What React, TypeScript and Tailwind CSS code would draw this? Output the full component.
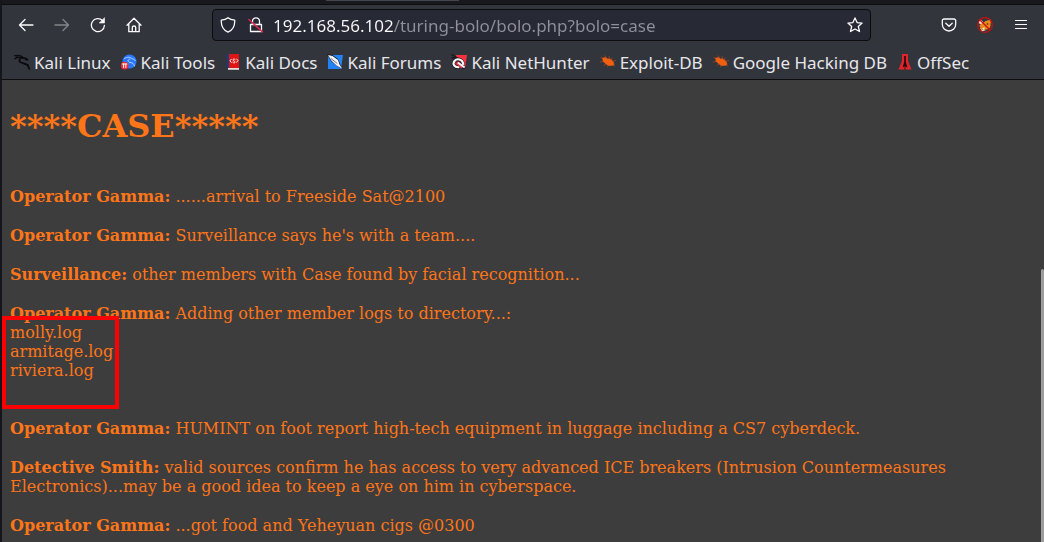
import type { ReactNode } from "react";

function Glyph({ children }: { children: ReactNode }) {
  return (
    <svg
      viewBox="0 0 16 16"
      className="size-4 shrink-0"
      fill="none"
      stroke="#fbfbfe"
      strokeWidth="1.3"
      strokeLinecap="round"
      strokeLinejoin="round"
      aria-hidden="true"
    >
      {children}
    </svg>
  );
}

function ToolButton({ label, disabled, children }: { label: string; disabled?: boolean; children: ReactNode }) {
  return (
    <button
      type="button"
      aria-label={label}
      disabled={disabled}
      className="flex h-8 w-9 items-center justify-center disabled:opacity-40"
    >
      <Glyph>{children}</Glyph>
    </button>
  );
}

function Dragon({ color }: { color: string }) {
  return (
    <g stroke={color} fill="none">
      <path d="M.5 1.8C4 .8 7.500 1.500 9.500 3.800M.8 4.800C3.500 2.800 6.500 2.800 9 4M2 2.800l3 .6" strokeWidth="1.100" />
      <path d="M9 3.800c2 .2 3.800 .8 4.800 2l-2.300-.3" strokeWidth="1.400" />
      <path d="M8.500 3.500C4.800 4.500 4.300 8 7.500 8.800c3.500 .8 6.500 1 7.800 6.200" strokeWidth="1.700" />
      <path d="M9 9.200c1.800 1.200 3.300 1.300 5 1.500" strokeWidth="1.300" />
    </g>
  );
}

function Bug() {
  return (
    <g stroke="#b8481a" strokeWidth=".7">
      <path d="M1 3.500l4 1.500M.5 8l4-1M5 1.800l2 3M9 2.500l.8 3M12 4l-.5 2.500M15.500 6.500l-3 1M4 11.500l2.500-2M7.500 12.500l1.500-2M14.800 12l-2.500-1.500" />
      <path
        d="M3 4.200c1.500-1 3.300-.5 4.500 .8c3-.6 5.800 1.800 6.500 5.500c-2.800 1.800-6.500 1.300-8.500-1.200C3.800 8.500 2.300 6.500 3 4.200z"
        fill="#f06010"
        stroke="#f06010"
      />
    </g>
  );
}

const bookmarks: { name: string; icon: ReactNode }[] = [
  { name: "Kali Linux", icon: <Dragon color="#08090b" /> },
  {
    name: "Kali Tools",
    icon: (
      <g stroke="none">
        <circle cx="8.500" cy="7.500" r="7" fill="#2777ff" />
        <path d="M3.500 4.500c3-2 6-1.500 7.500 .3c1.500 .1 2.700 .6 3.200 1.800M9 5c-3 .8-2.300 3 0 3.400c2.500 .4 4 1.200 4.500 3.600" fill="none" stroke="#c4deff" strokeWidth=".9" />
        <circle cx="3.600" cy="11.600" r="3.900" fill="#ed2b35" />
        <path d="M1.500 10h4.400M2.600 10v3.500M4.800 10v3.500" stroke="#fff" strokeWidth="1" />
      </g>
    ),
  },
  {
    name: "Kali Docs",
    icon: (
      <g stroke="none">
        <path d="M2 0h2v14H2z" fill="#173c83" />
        <path d="M4 0h10v14H4z" fill="#df1515" />
        <path d="M3 14h11v1.800H3z" fill="#eadada" />
        <path d="M6.300 5.200L5 6.800L6.300 8.400M10.200 5.600C9.300 4.500 8 4.800 8 6c0 1.200 2 .8 2 2.100c0 1-1.300 1.200-2.200 .3M11.700 5l1.300 1.600L11.700 8.200" fill="none" stroke="#fff" strokeWidth=".9" />
      </g>
    ),
  },
  {
    name: "Kali Forums",
    icon: (
      <g stroke="none">
        <path d="M1 1h15l-2 14H1z" fill="#2382f5" />
        <path d="M0 0l5 .8L11 5l2.500 6L15.500 15L10 12L4 7z" fill="#15171c" />
        <path d="M1 1l4.500 1L11 6l1.500 4.500l2.800 4.200L9.500 11.500L4.300 6.500z" fill="#f2f3f4" />
        <path d="M4 4.500l6 4.800" stroke="#4a5564" strokeWidth=".8" />
      </g>
    ),
  },
  {
    name: "Kali NetHunter",
    icon: (
      <g stroke="none">
        <path d="M5 1h11l-2 13H3z" fill="#f5323e" />
        <path d="M.5 .5L6 3.500M1 4l4-.5" stroke="#17191d" strokeWidth="1.300" />
        <path d="M11.800 9.500C11 5 6 4 3.500 7c-2.500 3.300 0 6.500 4 6.300M7 9.300l5.500 4" fill="none" stroke="#17191d" strokeWidth="3.600" />
        <path d="M6.500 9.500l4 3.200" stroke="#e9304c" strokeWidth="2.800" />
        <path d="M12.300 10C11.500 5 6 4 3.500 7c-2.500 3.300 0 6.500 4 6.300M7.500 9l5.500 4" fill="none" stroke="#f7f7f8" strokeWidth="2.100" />
      </g>
    ),
  },
  { name: "Exploit-DB", icon: <Bug /> },
  { name: "Google Hacking DB", icon: <Bug /> },
  {
    name: "OffSec",
    icon: (
      <g stroke="none">
        <path d="M5 0h6v7l3.500 8.500h-13L5 7z" fill="#e3242b" />
        <path d="M7.200 2h1.600v6l1.700 5.500L8 12l-2.500 1.500L7.200 8z" fill="#220609" />
        <path d="M7.600 12h.8v3.500h-.8z" fill="#220609" />
      </g>
    ),
  },
];

const logs = ["molly.log", "armitage.log", "riviera.log"];

function Entry({ who, children }: { who: string; children: ReactNode }) {
  return (
    <p>
      <b>{who}:</b> {children}
    </p>
  );
}

export default function App() {
  return (
    <div className="flex min-h-screen flex-col border-l-2 border-[#15161b] bg-[#3d3d3d] font-['Noto_Sans',sans-serif]">
      <header className="border-b border-[#0c0c0d] bg-[#33353d]">
        <div className="flex h-[5px] justify-center border-b border-[#0c0c0d] bg-[#18191d] pr-[262px]">
          <div className="h-px w-[133px] bg-[#42454f]" />
        </div>

        <nav aria-label="Navigation" className="flex items-center pt-1 pr-[5px] pl-1.5">
          <ToolButton label="Back">
            <path d="M15 8H1.500M7 2.500L1.500 8L7 13.500" />
          </ToolButton>
          <ToolButton label="Forward" disabled>
            <path d="M1 8h13.500M9 2.500L14.500 8L9 13.500" />
          </ToolButton>
          <ToolButton label="Reload">
            <path d="M14.400 8.500A6.500 6.500 0 1 1 12.500 3.500" />
            <path d="M14.500 1v5h-5z" fill="#fbfbfe" strokeWidth=".6" />
          </ToolButton>
          <ToolButton label="Home">
            <path d="M1 8.300L8 1.300l7 7M2.800 7v7.700h10.400V7M6.300 14.500V10.300q0-1.300 1.700-1.300t1.700 1.300v4.200" />
          </ToolButton>

          <div className="mx-[60px] flex h-8 flex-1 items-center rounded border border-[#0c0c0d] bg-[#272934] px-[7px]">
            <Glyph>
              <path d="M8 .8C6.300 2.300 3.800 3 1.300 3.200C1 8.500 2.800 13 8 15.200C13.200 13 15 8.500 14.700 3.200C12.200 3 9.700 2.300 8 .8z" />
            </Glyph>
            <div className="mr-[9px] ml-3 flex">
              <Glyph>
                <path d="M4.500 7V4.300a3.500 3.500 0 0 1 7 0V7M2.500 7.500h11v7h-11z" />
                <path d="M1 2.500l13.500 12.500" stroke="#e22850" strokeWidth="1.500" />
              </Glyph>
            </div>
            <input
              aria-label="Address"
              type="text"
              defaultValue="192.168.56.102/turing-bolo/bolo.php?bolo=case"
              className="h-7 min-w-0 flex-1 bg-[linear-gradient(to_right,#fbfbfe_120px,#8f9099_120px)] bg-clip-text text-[17px] text-transparent outline-none"
            />
            <button type="button" aria-label="Bookmark this page">
              <Glyph>
                <path d="M8 .9l2.100 4.700l5 .5l-3.800 3.400l1.200 5L8 12l-4.500 2.500l1.200-5L.9 6.100l5-.5z" />
              </Glyph>
            </button>
          </div>

          <ToolButton label="Save to Pocket">
            <path d="M3 2h10a1.700 1.700 0 0 1 1.700 1.700v3.600a6.700 6.700 0 0 1-13.400 0V3.700A1.700 1.700 0 0 1 3 2zM4.800 6.300L8 9.300l3.200-3" />
          </ToolButton>
          <ToolButton label="FoxyProxy">
            <g stroke="none">
              <path d="M1.500 6L3 2l3 2.500L5 8zM3 11l6 2l-4 1.500z" fill="#eee2d5" />
              <path d="M2.500 9c1-3 4-3 6-5l5.500-1.500l-.5 5c.5 3-2 5-4.500 5l-4.500 .5z" fill="#e8871a" />
              <path d="M5 11l3-.5l-1 2.500z" fill="#f6ead9" />
              <circle cx="10.500" cy="7" r=".8" fill="#40200b" />
            </g>
            <circle cx="8" cy="8" r="7.300" stroke="#cc1010" strokeWidth="1.200" />
            <path d="M3 3l10 10" stroke="#cc1010" strokeWidth="1.200" />
          </ToolButton>
          <ToolButton label="Application menu">
            <path d="M2.500 3.500h11M2.500 7.500h11M2.500 11.500h11" strokeWidth="1.200" />
          </ToolButton>
        </nav>

        <ul className="flex h-[38px] items-center gap-2.5 pt-1.5 pl-3 text-[17px] leading-6 text-[#e6e6ea]">
          {bookmarks.map(({ name, icon }) => (
            <li key={name}>
              <a href="#" className="flex items-center gap-1 whitespace-nowrap">
                <span className="pb-0.5">
                  <Glyph>{icon}</Glyph>
                </span>
                {name}
              </a>
            </li>
          ))}
        </ul>
      </header>

      <div className="flex flex-1">
        <main className="flex-1 px-2 pt-[27px] font-['DejaVu_Serif',serif] text-base leading-[19px] text-[#ff7518]">
          <h1 className="mb-[42px] text-[32px] leading-[38px] font-bold">****CASE*****</h1>
          <div className="flex flex-col gap-5">
            <Entry who="Operator Gamma">......arrival to Freeside Sat@2100</Entry>
            <Entry who="Operator Gamma">Surveillance says he's with a team....</Entry>
            <Entry who="Surveillance">other members with Case found by facial recognition...</Entry>
            <div className="pb-[19px]">
              <Entry who="Operator Gamma">Adding other member logs to directory...:</Entry>
              <div className="relative w-fit">
                <ul>
                  {logs.map((log) => (
                    <li key={log}>{log}</li>
                  ))}
                </ul>
                <div className="absolute -top-[7px] -right-1.5 -bottom-[29px] -left-2 border-4 border-[#ff0000]" />
              </div>
            </div>
            <Entry who="Operator Gamma">
              HUMINT on foot report high-tech equipment in luggage including a CS7 cyberdeck.
            </Entry>
            <Entry who="Detective Smith">
              valid sources confirm he has access to very advanced ICE breakers (Intrusion Countermeasures
              Electronics)...may be a good idea to keep a eye on him in cyberspace.
            </Entry>
            <Entry who="Operator Gamma">...got food and Yeheyuan cigs @0300</Entry>
          </div>
        </main>
        <div className="mt-[189px] w-[3px] rounded-t-sm bg-[#9e9d9d]" />
      </div>
    </div>
  );
}
